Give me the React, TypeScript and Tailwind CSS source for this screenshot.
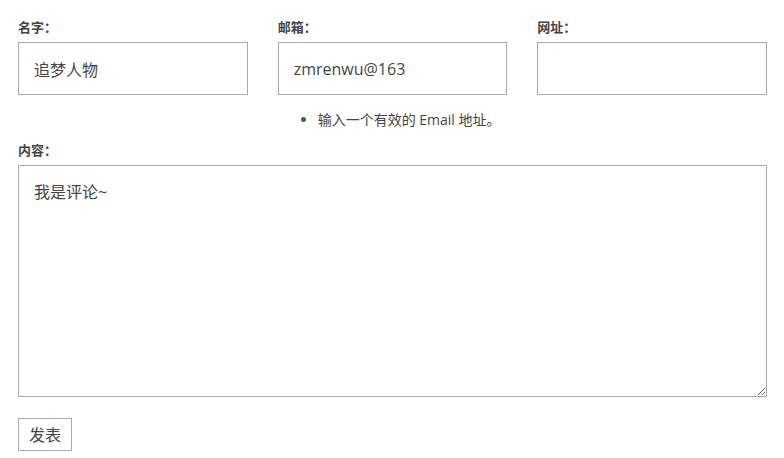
import React from 'react';

const font = { fontFamily: '"Open Sans", "Noto Sans CJK SC", sans-serif' };

const Field: React.FC<{ label: string; value?: string; children?: React.ReactNode }> = ({ label, value, children }) => (
  <div className="flex flex-col">
    <label className="text-[13px] font-bold text-[#444] leading-[18px] mb-[6px]">{label}</label>
    <input
      type="text"
      defaultValue={value}
      className="h-[53px] w-full border border-[#aaaaaa] bg-white px-[15px] text-[16px] text-[#444] outline-none"
    />
    {children}
  </div>
);

const App: React.FC = () => {
  return (
    <div className="bg-white w-[784px] h-[458px] pt-[18px] px-[18px] pr-[17px]" style={font}>
      <div className="grid grid-cols-3 gap-x-[30px]">
        <Field label="名字：" value="追梦人物" />
        <Field label="邮箱：" value="zmrenwu@163">
          <ul className="list-disc pl-[40px] mt-[15px] text-[14px] text-[#444] leading-[20px] marker:text-[#555]">
            <li>输入一个有效的 Email 地址。</li>
          </ul>
        </Field>
        <Field label="网址：" />
      </div>
      <div className="mt-[11px] flex flex-col">
        <label className="text-[13px] font-bold text-[#444] leading-[18px] mb-[6px]">内容：</label>
        <textarea
          defaultValue="我是评论~"
          className="h-[232px] w-full border border-[#aaaaaa] bg-white px-[15px] py-[15px] text-[16px] leading-[22px] text-[#444] outline-none"
        />
      </div>
      <button className="mt-[21px] h-[33px] w-[54px] border border-[#aaaaaa] bg-white text-[16px] text-[#444]">
        发表
      </button>
    </div>
  );
};

export default App;
